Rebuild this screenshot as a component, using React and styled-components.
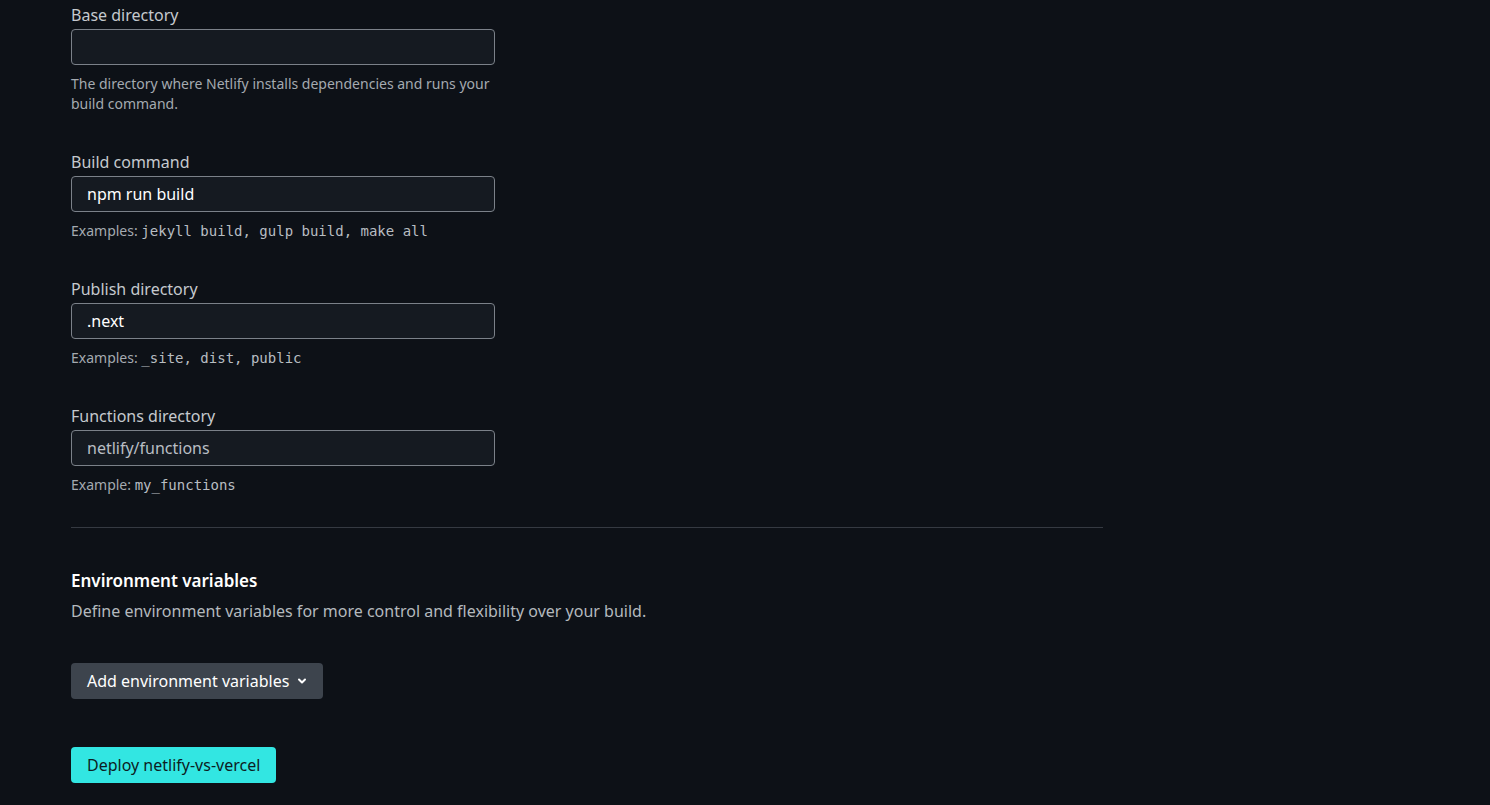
import React from "react";
import styled, { createGlobalStyle } from "styled-components";

const Global = createGlobalStyle`
  html, body { margin: 0; padding: 0; background: #0d1117; }
  body { font-family: "Noto Sans", "Open Sans", sans-serif; color: #d4d8dc; }
`;

const Page = styled.div`
  width: 1490px;
  height: 805px;
  overflow: hidden;
  background: #0d1117;
  box-sizing: border-box;
  padding: 3px 0 0 71px;
`;

const Section = styled.div`
  width: 1032px;
`;

const Field = styled.div`
  width: 424px;
  display: flex;
  flex-direction: column;
  margin-bottom: ${(p) => p.$mb || 36}px;
`;

const Label = styled.label`
  font-size: 16px;
  line-height: 24px;
  color: #c5c9ce;
  margin-bottom: 2px;
`;

const Input = styled.input`
  box-sizing: border-box;
  height: 36px;
  width: 100%;
  background: #151a21;
  border: 1px solid #7b8189;
  border-radius: 4px;
  padding: 0 15px;
  font-family: "Noto Sans", sans-serif;
  font-size: 16px;
  color: #ffffff;
  outline: none;
  &::placeholder { color: #b9bec4; }
`;

const Help = styled.div`
  margin-top: 9px;
  font-size: 14px;
  line-height: 20px;
  color: #a4aab0;
`;

const Code = styled.code`
  font-family: "DejaVu Sans Mono", "Liberation Mono", monospace;
  font-size: 14px;
  color: #b8bdc2;
`;

const Divider = styled.hr`
  border: none;
  border-top: 1px solid #353a42;
  margin: 0 0 40px 0;
  width: 1032px;
`;

const Heading = styled.h3`
  margin: 0;
  font-size: 17px;
  line-height: 26px;
  font-weight: 600;
  color: #ffffff;
`;

const Desc = styled.p`
  margin: 5px 0 40px 0;
  font-size: 16px;
  line-height: 24px;
  color: #b4b9be;
`;

const Button = styled.button`
  display: inline-flex;
  align-items: center;
  gap: 8px;
  height: 36px;
  box-sizing: border-box;
  padding: 0 16px;
  border: none;
  border-radius: 4px;
  font-family: "Noto Sans", sans-serif;
  font-size: 16px;
  background: ${(p) => (p.$primary ? "#32e6e2" : "#3d444d")};
  color: ${(p) => (p.$primary ? "#0d1d22" : "#ffffff")};
  cursor: pointer;
`;

const Stack = styled.div`
  display: flex;
  flex-direction: column;
  align-items: flex-start;
  gap: 48px;
`;

const Chevron = () => (
  <svg width="10" height="10" viewBox="0 0 10 10" fill="none">
    <path d="M2 3.5 L5 6.5 L8 3.5" stroke="#fff" strokeWidth="2" strokeLinecap="round" strokeLinejoin="round" />
  </svg>
);

export default function App() {
  return (
    <Page>
      <Global />
      <Section>
        <Field>
          <Label>Base directory</Label>
          <Input defaultValue="" />
          <Help>The directory where Netlify installs dependencies and runs your build command.</Help>
        </Field>
        <Field>
          <Label>Build command</Label>
          <Input defaultValue="npm run build" />
          <Help>
            Examples: <Code>jekyll build, gulp build, make all</Code>
          </Help>
        </Field>
        <Field>
          <Label>Publish directory</Label>
          <Input defaultValue=".next" />
          <Help>
            Examples: <Code>_site, dist, public</Code>
          </Help>
        </Field>
        <Field $mb={32}>
          <Label>Functions directory</Label>
          <Input placeholder="netlify/functions" />
          <Help>
            Example: <Code>my_functions</Code>
          </Help>
        </Field>
        <Divider />
        <Heading>Environment variables</Heading>
        <Desc>Define environment variables for more control and flexibility over your build.</Desc>
        <Stack>
          <Button>
            Add environment variables <Chevron />
          </Button>
          <Button $primary>Deploy netlify-vs-vercel</Button>
        </Stack>
      </Section>
    </Page>
  );
}
